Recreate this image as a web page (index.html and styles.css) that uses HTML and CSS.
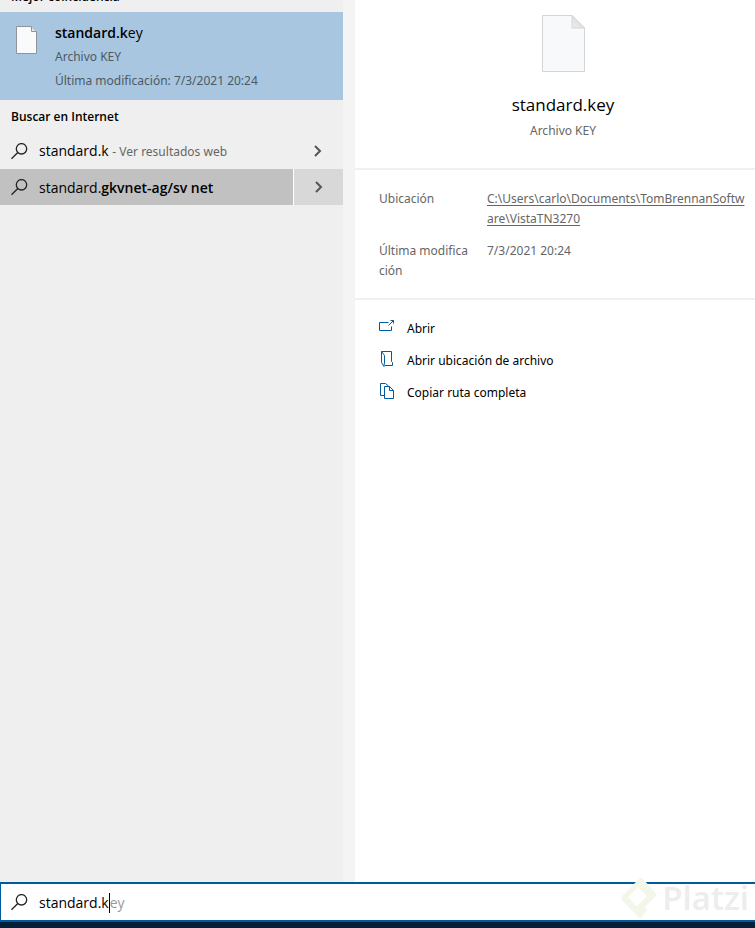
FILE: index.html
```html
<!DOCTYPE html>
<html lang="es">
<head>
  <meta charset="UTF-8">
  <meta name="viewport" content="width=device-width, initial-scale=1">
  <title>Búsqueda</title>
  <link rel="stylesheet" href="styles.css">
</head>
<body>

  <main class="panels">
    <section class="results">
      <h2 class="group-title group-title-cut">Mejor coincidencia</h2>
      <button class="best-match" type="button">
        <svg class="best-icon" width="22" height="28" viewBox="0 0 22 28">
          <path d="M.5.5h15l5 5v22H.5z" fill="#f8fafb" stroke="#8e9499"/>
          <path d="M15.5.5v5h5" fill="#e2e4e6" stroke="#8e9499"/>
        </svg>
        <span class="best-text">
          <span class="name"><b>standard.k</b>ey</span>
          <span class="meta">Archivo KEY</span>
          <span class="meta">Última modificación: 7/3/2021 20:24</span>
        </span>
      </button>

      <h2 class="group-title">Buscar en Internet</h2>
      <div class="row">
        <button class="row-main" type="button">
          <svg class="lens" width="18" height="18" viewBox="0 0 18 18"><circle cx="10.500" cy="5.800" r="5.200"/><path d="M6.800 9.500L.5 15.800"/></svg>
          <span>standard.k <small>- Ver resultados web</small></span>
        </button>
        <button class="row-more" type="button" aria-label="Ver más resultados de standard.k">
          <svg class="chevron" width="8" height="12" viewBox="0 0 8 12"><path d="M1 1l5 5-5 5"/></svg>
        </button>
      </div>
      <div class="row selected">
        <button class="row-main" type="button">
          <svg class="lens" width="18" height="18" viewBox="0 0 18 18"><circle cx="10.500" cy="5.800" r="5.200"/><path d="M6.800 9.500L.5 15.800"/></svg>
          <span>standard.<b>gkvnet-ag/sv net</b></span>
        </button>
        <button class="row-more" type="button" aria-label="Ver más resultados de standard.gkvnet-ag/sv net">
          <svg class="chevron" width="8" height="12" viewBox="0 0 8 12"><path d="M1 1l5 5-5 5"/></svg>
        </button>
      </div>
    </section>

    <section class="preview">
      <header class="file">
        <svg width="43" height="57" viewBox="0 0 43 57">
          <defs>
            <linearGradient id="fold" x1="0" y1="1" x2="1" y2="0">
              <stop offset="0" stop-color="#eeeeee"/>
              <stop offset="1" stop-color="#d4d4d4"/>
            </linearGradient>
          </defs>
          <path d="M.5.5h29.500l12.500 12.500v43.500H.5z" fill="#f7f9fa" stroke="#d3d5d6"/>
          <path d="M30 .5v12.500h12.500z" fill="url(#fold)" stroke="#d3d5d6"/>
        </svg>
        <h1>standard.key</h1>
        <p>Archivo KEY</p>
      </header>

      <table class="details">
        <tr>
          <th scope="row">Ubicación</th>
          <td><a href="#">C:\Users\carlo\Documents\TomBrennanSoftware\VistaTN3270</a></td>
        </tr>
        <tr>
          <th scope="row">Última modificación</th>
          <td>7/3/2021 20:24</td>
        </tr>
      </table>

      <div class="actions">
        <button type="button">
          <svg width="16" height="16" viewBox="0 0 16 16"><path d="M9.500 3.500h-9v8h12v-4M9.500 6.500l5-5M11.500 1.500h3v3"/></svg>
          Abrir
        </button>
        <button type="button">
          <svg width="16" height="16" viewBox="0 0 16 16"><path d="M2.500.5h10v10l1 1v3H6M2.500.5v11l2.500 4 .5-4.500V4.500z"/></svg>
          Abrir ubicación de archivo
        </button>
        <button type="button">
          <svg width="16" height="16" viewBox="0 0 16 16"><path d="M5 12.500H1.500V.5h5l3 2.500M5.500 3.500h5l4 4v8h-9zM10.500 3.500v4h4"/></svg>
          Copiar ruta completa
        </button>
      </div>
    </section>
  </main>

  <div class="search">
    <svg class="lens" width="18" height="18" viewBox="0 0 18 18"><circle cx="10.500" cy="5.800" r="5.200"/><path d="M6.800 9.500L.5 15.800"/></svg>
    <input type="text" value="standard.k" size="10" aria-label="Buscar">
    <span class="suggestion">ey</span>
  </div>
  <div class="taskbar"></div>

  <div class="watermark">
    <svg width="36" height="42" viewBox="0 0 36 42">
      <path d="M18 2q2-2 4 0l12 13q2 2.500 0 5L24 30l2 3-5 7q-2 1.500-4 0L1 23q-1.500-2 0-4zM17 10L7.500 20l8 9.500L26 19z" fill="#f3f7e9" fill-rule="evenodd"/>
    </svg>
    Platzi
  </div>

</body>
</html>
```

FILE: styles.css
```css
:root {
  --azul: #005a9e;
  --gris: #efefef;
  --texto: #666;
}

* {
  box-sizing: border-box;
}

body {
  margin: 0;
  height: 100vh;
  display: flex;
  flex-direction: column;
  overflow: hidden;
  font-family: "Open Sans", "Noto Sans", sans-serif;
  font-size: 14px;
  line-height: 20px;
  color: #000;
  background: #fff;
}

button {
  border: 0;
  padding: 0;
  background: none;
  font: inherit;
  color: inherit;
  text-align: left;
  cursor: pointer;
}

b {
  font-weight: 600;
}

.panels {
  flex: 1;
  min-height: 0;
  display: grid;
  grid-template-columns: 355px 1fr;
}

/* results list */

.results {
  background: var(--gris);
  border-right: 12px solid #f4f4f4;
  overflow: hidden;
}

.group-title {
  margin: 0;
  padding: 7px 11px 5px;
  font-size: 12px;
  font-weight: 600;
}

/* list is scrolled, only the foot of this title shows */
.group-title-cut {
  margin-top: -20px;
}

.best-match {
  display: flex;
  gap: 17px;
  width: 100%;
  height: 88px;
  padding: 9px 16px;
  background: #a8c6df;
}

.best-icon {
  margin-top: 5px;
}

.best-text {
  display: flex;
  flex-direction: column;
  line-height: 24px;
}

.meta,
.row-main small,
.file p,
.details,
.actions {
  font-family: "Noto Sans", "Open Sans", sans-serif;
  font-size: 12px;
}

.meta {
  color: #4c5a66;
}

.row {
  display: flex;
  height: 37px;
}

.row-main {
  flex: 1;
  display: flex;
  align-items: center;
  gap: 10px;
  padding: 2px 0 0 11px;
}

.row-main small {
  color: var(--texto);
}

.row-more {
  display: grid;
  place-items: center;
  width: 50px;
}

.selected {
  height: 36px;
  background: #d8d8d8;
}

.selected .row-main {
  background: #c1c1c1;
}

.selected .row-more {
  border-left: 1px solid #fff;
}

.lens {
  fill: none;
  stroke: #222;
  stroke-width: 1.3;
}

.chevron {
  fill: none;
  stroke: #555;
  stroke-width: 2;
}

/* file preview */

.file {
  display: flex;
  flex-direction: column;
  align-items: center;
  height: 170px;
  padding: 15px 0 0 16px;
  border-bottom: 2px solid #f0f0f0;
}

.file h1 {
  margin: 21px 0 0;
  font-size: 17px;
  font-weight: 400;
  line-height: 24px;
}

.file p {
  margin: 4px 0 0;
  color: var(--texto);
}

.details {
  width: 100%;
  table-layout: fixed;
  border-spacing: 0;
  padding: 19px 8px 5px 24px;
  border-bottom: 2px solid #f0f0f0;
  color: var(--texto);
}

.details th,
.details td {
  padding: 0 0 12px;
  font-weight: 400;
  text-align: left;
  vertical-align: top;
  word-break: break-all;
}

.details th {
  width: 108px;
  padding-right: 16px;
}

.details a {
  color: inherit;
  text-underline-offset: 2px;
}

.actions {
  display: flex;
  flex-direction: column;
  padding: 13px 24px;
}

.actions button {
  display: flex;
  align-items: center;
  gap: 12px;
  height: 32px;
}

.actions svg {
  margin-bottom: 4px;
  fill: none;
  stroke: var(--azul);
}

/* search box */

.search {
  display: flex;
  align-items: center;
  height: 40px;
  padding: 2px 0 0 10px;
  border: 2px solid var(--azul);
  border-right: 0;
  border-left-width: 1px;
  background: #fff;
}

.search input {
  field-sizing: content;
  margin-left: 10px;
  padding: 0;
  border: 0;
  outline: 0;
  background: none;
  font: inherit;
}

.suggestion {
  border-left: 1px solid #000;
  color: #999;
}

.taskbar {
  height: 6px;
  background: #041f38;
}

.watermark {
  position: absolute;
  right: 6px;
  bottom: 9px;
  display: flex;
  align-items: center;
  gap: 5px;
  font-family: "Open Sans", sans-serif;
  font-size: 33px;
  font-weight: 600;
  line-height: 42px;
  color: #ededed;
  pointer-events: none;
}
```
